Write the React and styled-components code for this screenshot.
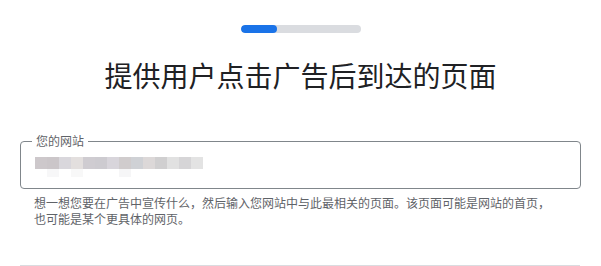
import React from "react";
import styled, { createGlobalStyle } from "styled-components";

const GlobalStyle = createGlobalStyle`
  html, body {
    margin: 0;
    padding: 0;
    background: #ffffff;
    font-family: "Noto Sans CJK SC", "Noto Sans", Roboto, sans-serif;
  }
`;

const Page = styled.div`
  width: 601px;
  height: 266px;
  overflow: hidden;
  padding-top: 25px;
  box-sizing: border-box;
  display: flex;
  flex-direction: column;
`;

const Track = styled.div`
  align-self: center;
  width: 120px;
  height: 8px;
  border-radius: 4px;
  background: #dadce0;
  overflow: hidden;
`;

const Fill = styled.div`
  height: 100%;
  border-radius: 4px;
  background: #1a73e8;
`;

const Title = styled.h1`
  margin: 24px 0 0;
  text-align: center;
  font-size: 28px;
  line-height: 36px;
  font-weight: 400;
  color: #202124;
`;

const Field = styled.fieldset`
  margin: 42px 20px 0 20px;
  padding: 0 11px 11px;
  border: 1px solid #80868b;
  border-radius: 4px;
`;

const Legend = styled.legend`
  padding: 0 4px;
  font-size: 12px;
  line-height: 12px;
  color: #5f6368;
`;

const Mosaic = styled.div`
  margin: 10px 0 0 3px;
  display: grid;
  grid-template-columns: repeat(14, 12px);
  grid-auto-rows: 12px 8px;
`;

const Cell = styled.span`
  background: ${(p) => p.$c};
`;

const Helper = styled.p`
  margin: 6px 20px 0 34px;
  font-size: 12px;
  line-height: 16px;
  color: #5f6368;
`;

const Divider = styled.hr`
  margin: auto 21px 0 20px;
  border: none;
  height: 1px;
  background: #dadce0;
`;

const topRow = [
  "#cdc8cb", "#cbc6c9", "#d9d7dc", "#e3dfde", "#cfccd1", "#cdcbd0", "#d8d5db",
  "#d0cccd", "#cfd1d5", "#dcd8d8", "#d0cfd0", "#e1e1e1", "#d6d5d7", "#e3e3e3",
];
const bottomRow = [
  "#ffffff", "#f7f7f8", "#ffffff", "#f8f8f8", "#ffffff", "#ffffff", "#ffffff",
  "#f6f6f7", "#ffffff", "#ffffff", "#ffffff", "#ffffff", "#ffffff", "#ffffff",
];

export default function App() {
  return (
    <>
      <GlobalStyle />
      <Page>
        <Track>
          <Fill style={{ width: "30%" }} />
        </Track>
        <Title>提供用户点击广告后到达的页面</Title>
        <Field>
          <Legend>您的网站</Legend>
          <Mosaic>
            {topRow.concat(bottomRow).map((c, i) => (
              <Cell key={i} $c={c} />
            ))}
          </Mosaic>
        </Field>
        <Helper>
          想一想您要在广告中宣传什么，然后输入您网站中与此最相关的页面。该页面可能是网站的首页，
          <br />
          也可能是某个更具体的网页。
        </Helper>
        <Divider />
      </Page>
    </>
  );
}
